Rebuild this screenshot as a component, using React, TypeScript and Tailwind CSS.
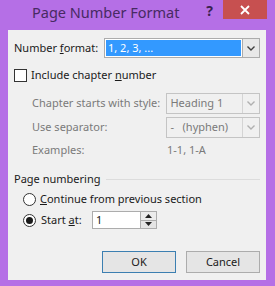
import React from 'react';

const font = { fontFamily: '"Noto Sans", "Open Sans", sans-serif' };

const Chevron = ({ color = '#404040' }: { color?: string }) => (
  <svg width="8" height="5" viewBox="0 0 8 5">
    <path d="M0.5 0.5 L4 4 L7.5 0.5" fill="none" stroke={color} strokeWidth="1.4" />
  </svg>
);

const DisabledSelect = ({ value }: { value: string }) => (
  <div className="flex h-[21px] w-[94px] border border-[#c4c4c4] bg-[#f0f0f0]">
    <div className="flex flex-1 items-center whitespace-pre pl-[3px] text-[#7a7a7a]">{value}</div>
    <div className="flex w-[17px] items-center justify-center border-l border-[#d4d4d4]">
      <Chevron color="#b0b0b0" />
    </div>
  </div>
);

const Radio = ({ checked }: { checked?: boolean }) => (
  <div className="flex h-[13px] w-[13px] items-center justify-center rounded-full border border-[#333] bg-white">
    {checked && <div className="h-[7px] w-[7px] rounded-full bg-[#1a1a1a]" />}
  </div>
);

export default function App() {
  return (
    <div
      className="flex h-[286px] w-[275px] flex-col whitespace-nowrap bg-[#b56fe6] text-[11px] text-[#1a1a1a]"
      style={font}
    >
      {/* title bar */}
      <div className="flex h-[30px]">
        <div className="flex h-[26px] items-center pl-[32px] text-[14.5px] text-[#472a62]">Page Number Format</div>
        <div className="ml-auto mr-[10px] flex h-[20px] items-center text-[14px] font-bold text-[#3a2250]">?</div>
        <div className="mr-[8px] flex h-[19px] w-[44px] items-center justify-center bg-[#c75050]">
          <svg width="10" height="10" viewBox="0 0 10 10">
            <path d="M1 1 L9 9 M9 1 L1 9" stroke="#fff" strokeWidth="1.8" />
          </svg>
        </div>
      </div>

      {/* client area */}
      <div className="ml-[8px] mr-[9px] flex h-[250px] flex-col bg-[#f0f0f0] px-[6px] pt-[8px]">
        <div className="flex h-[20px] items-center">
          <div className="w-[90px]">
            Number <u>f</u>ormat:
          </div>
          <div className="flex h-[20px] w-[156px] border border-[#acacac] bg-white">
            <div className="m-[1px] flex flex-1 items-center bg-[#3399ff] pl-[2px] text-white">1, 2, 3, ...</div>
            <div className="flex w-[17px] items-center justify-center border-l border-[#acacac] bg-[#e8e8e8]">
              <Chevron />
            </div>
          </div>
        </div>

        <div className="mt-[11px] flex h-[13px] items-center">
          <div className="h-[13px] w-[13px] border border-[#333] bg-white" />
          <div className="ml-[4px]">
            Include chapter <u>n</u>umber
          </div>
        </div>

        <div className="mt-[11px] flex h-[21px] items-center pl-[18px] text-[#7a7a7a]">
          <div className="w-[135px]">Chapter starts with style:</div>
          <DisabledSelect value="Heading 1" />
        </div>
        <div className="mt-[3px] flex h-[21px] items-center pl-[18px] text-[#7a7a7a]">
          <div className="w-[135px]">Use separator:</div>
          <DisabledSelect value="-   (hyphen)" />
        </div>
        <div className="mt-[4px] flex h-[16px] items-center pl-[18px] text-[#7a7a7a]">
          <div className="w-[135px]">Examples:</div>
          <div>1-1, 1-A</div>
        </div>

        <div className="mt-[13px] flex h-[16px] items-center">
          <div>Page numbering</div>
          <div className="ml-[6px] h-px flex-1 bg-[#dcdcdc]" />
        </div>

        <div className="mt-[4px] flex h-[16px] items-center pl-[9px]">
          <Radio />
          <div className="ml-[4px]">
            <u>C</u>ontinue from previous section
          </div>
        </div>

        <div className="mt-[4px] flex h-[18px] items-center pl-[9px]">
          <Radio checked />
          <div className="ml-[5px] w-[51px]">
            Start <u>a</u>t:
          </div>
          <div className="flex h-[18px] w-[65px] border border-[#acacac] bg-white">
            <div className="flex flex-1 items-center pl-[3px]">1</div>
            <div className="flex w-[16px] flex-col border-l border-[#acacac]">
              <div className="flex flex-1 items-center justify-center border-b border-[#acacac] bg-[#ececec]">
                <svg width="7" height="4" viewBox="0 0 7 4">
                  <path d="M0 4 L3.5 0 L7 4 Z" fill="#222" />
                </svg>
              </div>
              <div className="flex flex-1 items-center justify-center bg-[#e4e4e4]">
                <svg width="7" height="4" viewBox="0 0 7 4">
                  <path d="M0 0 L3.5 4 L7 0 Z" fill="#222" />
                </svg>
              </div>
            </div>
          </div>
        </div>

        <div className="mt-[22px] flex justify-end gap-[10px]">
          <div className="flex h-[22px] w-[74px] items-center justify-center border border-[#3c7fb1] bg-[#e5e5e5]">OK</div>
          <div className="flex h-[22px] w-[74px] items-center justify-center border border-[#acacac] bg-[#e5e5e5]">Cancel</div>
        </div>
      </div>
    </div>
  );
}
